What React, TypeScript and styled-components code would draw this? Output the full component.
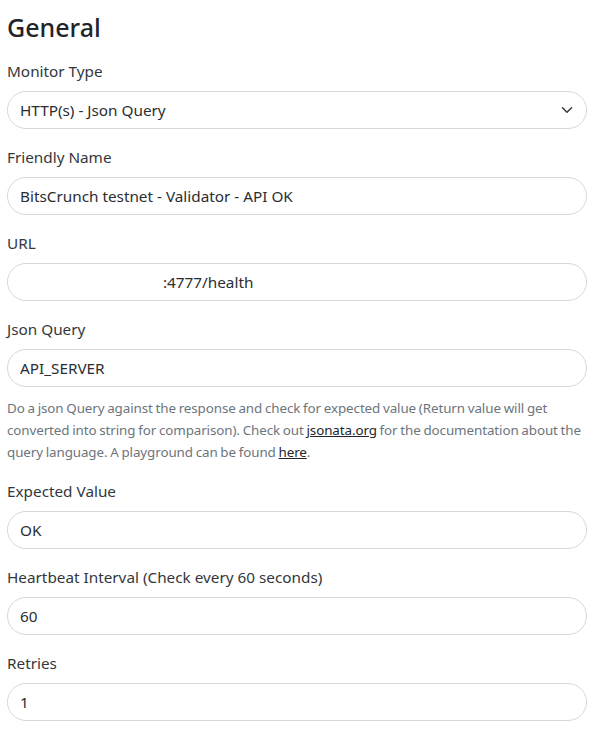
import React from "react";
import styled, { createGlobalStyle } from "styled-components";

const Global = createGlobalStyle`
  html, body { margin: 0; padding: 0; background: #ffffff; }
  body {
    font-family: "Noto Sans", "Open Sans", sans-serif;
    color: #212529;
    -webkit-font-smoothing: antialiased;
  }
  * { box-sizing: border-box; }
`;

const Page = styled.div`
  padding: 9px 9px 0 7px;
  height: 730px;
  overflow: hidden;
`;

const Heading = styled.h2`
  margin: 0 0 14px 0;
  font-size: 25px;
  line-height: 36px;
  font-weight: 500;
  color: #212529;
`;

const Field = styled.div`
  display: flex;
  flex-direction: column;
  margin-bottom: 16px;
`;

const Label = styled.label`
  font-size: 15.3px;
  line-height: 24px;
  margin-bottom: 8px;
  color: #33373b;
`;

const InputWrap = styled.div`
  position: relative;
`;

const Input = styled.input<{ $indent?: number }>`
  width: 100%;
  height: 38px;
  border: 1px solid #d5d8dc;
  border-radius: 19px;
  padding: 0 12px;
  font-family: inherit;
  font-size: 15.3px;
  color: #2a2e32;
  background: #fff;
  outline: none;
  text-indent: ${(p) => p.$indent ?? 0}px;
`;

const Chevron = styled.svg`
  position: absolute;
  right: 12px;
  top: 13px;
  width: 16px;
  height: 12px;
  pointer-events: none;
`;

const Help = styled.div<{ $top?: number }>`
  margin-top: ${(p) => p.$top ?? 10}px;
  font-size: 13.4px;
  letter-spacing: -0.1px;
  word-spacing: -0.6px;
  line-height: 22px;
  color: #6c757d;
`;

const HelpLink = styled.a`
  color: #212529;
  text-decoration: underline;
`;

type F = { label: string; value: string; indent?: number; select?: boolean };

const FieldRow = ({ label, value, indent, select, children }: F & { children?: React.ReactNode }) => (
  <Field>
    <Label>{label}</Label>
    <InputWrap>
      <Input readOnly value={value} $indent={indent} />
      {select && (
        <Chevron viewBox="0 0 16 16" fill="none" stroke="#343a40" strokeWidth={2} strokeLinecap="round" strokeLinejoin="round">
          <path d="m2 5 6 6 6-6" />
        </Chevron>
      )}
    </InputWrap>
    {children}
  </Field>
);

export default function App() {
  return (
    <>
      <Global />
      <Page>
        <Heading>General</Heading>
        <FieldRow label="Monitor Type" value="HTTP(s) - Json Query" select />
        <FieldRow label="Friendly Name" value="BitsCrunch testnet - Validator - API OK" />
        <FieldRow label="URL" value=":4777/health" indent={143} />
        <FieldRow label="Json Query" value="API_SERVER">
          <Help>
            Do a json Query against the response and check for expected value (Return value will get
            converted into string for comparison). Check out <HelpLink>jsonata.org</HelpLink> for the
            documentation about the query language. A playground can be found <HelpLink>here</HelpLink>.
          </Help>
        </FieldRow>
        <FieldRow label="Expected Value" value="OK" />
        <FieldRow label="Heartbeat Interval (Check every 60 seconds)" value="60" />
        <FieldRow label="Retries" value="1">
          <Help $top={3}>
            Maximum retries before the service is marked as down and a notification is sent
          </Help>
        </FieldRow>
      </Page>
    </>
  );
}
